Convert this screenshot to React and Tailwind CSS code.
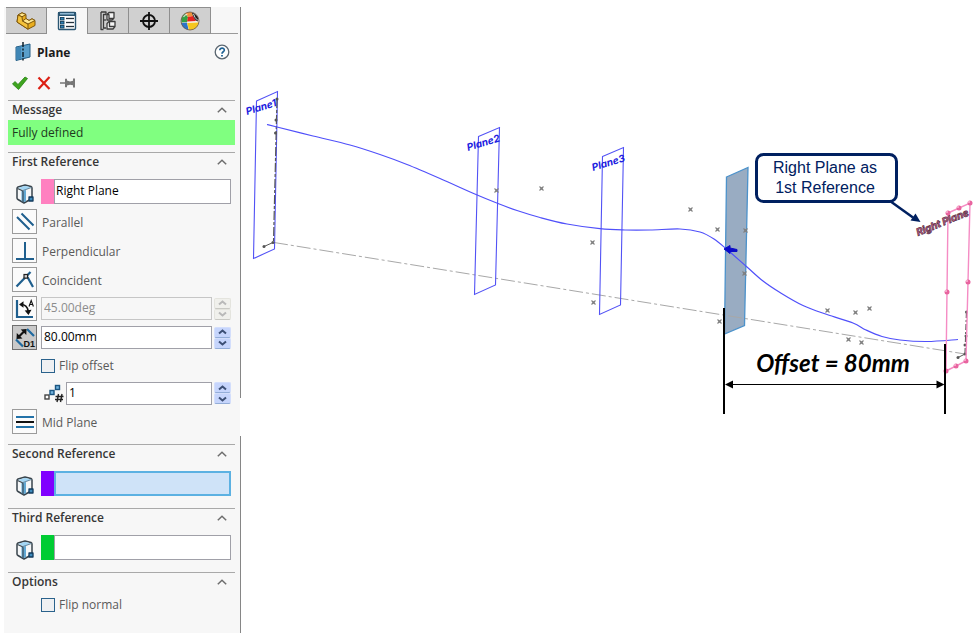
import { useState } from 'react';

const SANS = "font-['Open_Sans','Noto_Sans',sans-serif]";

/* ---------- icons ---------- */

const PartIcon = () => (
    <svg viewBox="0 0 20 18" className="w-5 h-[18px]" stroke="#7d560c" strokeWidth="1" strokeLinejoin="round">
        <path d="M1 10 L2 3 L6 .8 L10 2.500 V6.500 L13 8.500 L16 6.800 L19 8.500 V13.500 L12 17.200 Z" fill="#e9ae1f" />
        <path d="M2 3 L6 .8 L10 2.500 L6 4.800 Z" fill="#ffe68a" />
        <path d="M2 3 L6 4.800 L6.500 9 L12 12 V17.200 L1 10 Z" fill="#f4c23a" />
        <path d="M6.500 9 L10 6.500 L13 8.500 L16 6.800 L19 8.500 L12 12 Z" fill="#ffe891" />
    </svg>
);

const PropertyIcon = () => (
    <svg viewBox="0 0 20 20" className="w-5 h-5">
        <rect x="1.500" y="1.500" width="17" height="17" rx="1" fill="#fff" stroke="#2b5672" strokeWidth="1.400" />
        <rect x="1" y="1" width="18" height="4" fill="#2b5672" />
        <rect x="3" y="2" width="14" height="1.500" fill="#8fb8d4" />
        {[6, 10, 14].map((y) => (
            <g key={y}>
                <rect x="3.500" y={y + 0.5} width="3.500" height="2.500" fill="#2f82b8" stroke="#16405c" strokeWidth=".9" />
                <path d={`M9 ${y + 1.5} H17`} stroke="#26343e" strokeWidth="1.300" />
            </g>
        ))}
    </svg>
);

const ConfigIcon = () => (
    <svg viewBox="0 0 18 20" className="w-[18px] h-5" fill="none" stroke="#3c3c3c" strokeWidth="1.300" strokeLinejoin="round">
        <path d="M2 1 H7 V3.500 H4.500 V17 H7 M2 1 V18.500 H4.500" />
        <path d="M4.500 9 H7" />
        <path d="M8 3.500 L10 1.500 H15 V7 L13 9 H8 Z" fill="#f4f4f4" />
        <path d="M8 3.500 H10.500 M10 4 V7.500 H15" />
        <path d="M8 12.500 L10 10.500 H16 V15.500 L14 18 H8 Z" fill="#f4f4f4" />
        <path d="M10.500 11 V15.500 H16" />
    </svg>
);

const TargetIcon = () => (
    <svg viewBox="0 0 20 20" className="w-5 h-5" fill="none" stroke="#111" strokeWidth="1.800">
        <circle cx="10" cy="10" r="6" />
        <path d="M10 1 V19 M1 10 H19" />
    </svg>
);

const AppearanceIcon = () => (
    <svg viewBox="0 0 20 20" className="w-5 h-5">
        <circle cx="10" cy="10" r="9" fill="#f7f1e6" />
        <path d="M1.200 8.500 A9 9 0 0 1 5 2.500 L8 6 L7 11 L1.500 11.500 Z" fill="#35a043" />
        <path d="M5 2.500 A9 9 0 0 1 12 1.200 L13 5 L8 6 Z" fill="#f0913a" />
        <path d="M8 6 L13 5 L16 10 L7 10.500 Z" fill="#e52320" />
        <path d="M1.200 12 L7 11.500 L8.500 18.800 A9 9 0 0 1 1.200 12 Z" fill="#2c74c8" />
        <path d="M7.200 12 L18.800 11.500 A9 9 0 0 1 9 19 Z" fill="#f6c61f" />
        <path d="M12 2 Q14.500 1.500 17.500 5.500 Q19.200 8.500 17.800 10.500 Q14 9 12 2 Z" fill="#1d1d1d" />
        <path d="M13.500 3 Q14.500 7 18 9.500" stroke="#d8d8d8" strokeWidth="1" fill="none" />
        <path d="M3.500 6 Q5 3.500 7.500 3" stroke="#fff" strokeWidth="1.200" fill="none" opacity=".7" />
        <circle cx="10" cy="10" r="9" fill="none" stroke="#6b5646" strokeWidth=".8" />
    </svg>
);

const PlaneIcon = () => (
    <svg viewBox="0 0 16 20" className="w-4 h-5">
        <path d="M1 5 L15 2 V15 L1 18.500 Z" fill="#5a9fcb" stroke="#245f87" strokeWidth="1" />
        <path d="M1.500 5.500 L6 4.500 V16.500 L1.500 18 Z" fill="#3f86b5" />
        <path d="M8 0 V20" stroke="#10222e" strokeWidth="1.500" strokeDasharray="5 1.500 2 1.500" />
    </svg>
);

const HelpIcon = () => (
    <svg viewBox="0 0 16 16" className="w-4 h-4" fill="none">
        <circle cx="8" cy="8" r="6.800" fill="#fff" stroke="#5a6670" strokeWidth="1.300" />
        <path d="M5.800 6.200 C5.800 3.400 10.400 3.500 10.300 6.200 C10.200 7.800 8 7.700 8 9.700" stroke="#1f6294" strokeWidth="1.700" />
        <path d="M8 10.900 V12.600" stroke="#1f6294" strokeWidth="1.800" />
    </svg>
);

const OkIcon = () => (
    <svg viewBox="0 0 16 14" className="w-4 h-3.5">
        <path d="M.5 8 L3 5.500 L6 8.500 L13 1 L15.500 2.500 L6.500 13.500 Z" fill="#3fa51f" stroke="#22800f" strokeWidth=".8" />
    </svg>
);

const CancelIcon = () => (
    <svg viewBox="0 0 14 14" className="w-3.5 h-3.5" stroke="#dc2014" strokeWidth="2.200">
        <path d="M1.500 1.500 L12.500 13 M12.500 1 L1.500 13" />
    </svg>
);

const PinIcon = () => (
    <svg viewBox="0 0 16 10" className="w-4 h-2.5" fill="#777">
        <path d="M0 4.300 H5 V5.800 H0 Z M5 .8 H7 V2.500 L10 3.500 L13 2.800 V.5 H15 V9.500 H13 V7.200 L10 6.800 L7 7.600 V9.300 H5 Z" />
    </svg>
);

const ChevronIcon = () => (
    <svg viewBox="0 0 10 6" className="w-2.5 h-1.5" fill="none" stroke="#6e6e6e" strokeWidth="1.500">
        <path d="M.8 5.200 L5 1.200 L9.200 5.200" />
    </svg>
);

const CubeIcon = () => (
    <svg viewBox="0 0 20 20" className="w-5 h-5 shrink-0" strokeLinejoin="round">
        <path d="M2 4.500 Q2 3.500 3 3 L10 1 L16 2.500 Q17 3 17 4 V14.500 L9 19 L3 15.500 Q2 15 2 14 Z" fill="#f5f7f8" stroke="#39444c" strokeWidth="1.500" />
        <path d="M3 4 L10 1.800 L16 3.500 L9 6.500 Z" fill="#a3d6f4" />
        <path d="M6.500 7 Q7 6.300 8.500 6.500 L11 6 V17.200 L8.500 18.300 L6.500 17 Z" fill="#62a9d4" />
        <path d="M2.500 4.500 L7 6.500 Q8 7 8 8 V18" fill="none" stroke="#39444c" strokeWidth="1.100" />
        <path d="M7.500 6.700 L16.500 3.500" stroke="#5c7f96" strokeWidth=".9" />
        <rect x="14" y="13" width="4" height="4" fill="#3f8cbd" stroke="#123a5c" strokeWidth="1.300" />
    </svg>
);

const ParallelIcon = () => (
    <svg viewBox="0 0 20 20" className="w-5 h-5" stroke="#1f5f8e" strokeWidth="2">
        <path d="M2 5 L14.500 17.500 M6.500 1.500 L18.500 13.500" />
    </svg>
);

const PerpendicularIcon = () => (
    <svg viewBox="0 0 20 20" className="w-5 h-5" stroke="#1f5f8e" strokeWidth="2">
        <path d="M10 1 V17 M1 18 H19" />
    </svg>
);

const CoincidentIcon = () => (
    <svg viewBox="0 0 20 20" className="w-5 h-5" fill="none" stroke="#1f5f8e" strokeWidth="2.200">
        <path d="M1.500 16.500 L15.500 2" />
        <path d="M10.500 6 L13 8 L18 17" />
        <rect x="9" y="4.500" width="3.600" height="3.600" stroke="#222" strokeWidth="1.200" fill="#cfcfcf" />
    </svg>
);

const AngleIcon = () => (
    <svg viewBox="0 0 20 20" className="w-5 h-5" fill="none">
        <path d="M2 1 V18 H18" stroke="#1f5f8e" strokeWidth="2.200" />
        <path d="M6 5.500 Q12 5.500 13.200 12" stroke="#111" strokeWidth="1.600" />
        <path d="M4 5.500 L8.500 2.300 V8.700 Z M13.500 16 L9.700 11.500 L16.500 10.800 Z" fill="#111" />
        <path d="M14 7.500 L16.200 1.500 L18.400 7.500 M14.800 5.500 H17.600" stroke="#111" strokeWidth="1.100" />
    </svg>
);

const DistanceIcon = () => (
    <svg viewBox="0 0 22 22" className="w-[22px] h-[22px] shrink-0" fill="none">
        <path d="M2 12.500 L9 19.500 M13 2 L20 9" stroke="#1f6aa0" strokeWidth="2.200" />
        <path d="M5 9.500 L10 4.500" stroke="#111" strokeWidth="2.200" />
        <path d="M2.500 12 L2.800 6 L8.500 11.500 Z M12.500 2 L12.300 8 L6.700 2.500 Z" fill="#111" />
        <text x="9.500" y="20" fontSize="9" fontWeight="600" fill="#111" fontFamily="Liberation Sans">D1</text>
    </svg>
);

const MidPlaneIcon = () => (
    <svg viewBox="0 0 20 20" className="w-5 h-5" strokeWidth="2">
        <path d="M1 5 H19 M1 15 H19" stroke="#2372a8" />
        <path d="M1 10 H19" stroke="#111" />
    </svg>
);

const InstancesIcon = () => (
    <svg viewBox="0 0 20 19" className="w-5 h-[19px] shrink-0" fill="#fff" strokeWidth="1.400">
        <rect x="1" y="11" width="4" height="4" stroke="#444" />
        <rect x="6" y="6.500" width="4" height="4" stroke="#1b5580" fill="#6fb1dc" />
        <rect x="11.500" y="1.500" width="4" height="4" stroke="#1b5580" fill="#6fb1dc" />
        <path d="M14.500 10 L13 18 M18 10 L16.500 18 M11.500 12.500 H19.500 M11 15.500 H19" stroke="#222" />
    </svg>
);

/* ---------- property panel ---------- */

const tabs = [
    { label: 'Feature tree', icon: PartIcon },
    { label: 'Property manager', icon: PropertyIcon },
    { label: 'Configurations', icon: ConfigIcon },
    { label: 'Dimensions', icon: TargetIcon },
    { label: 'Appearances', icon: AppearanceIcon },
];

const Section = ({ title, className = '', children }) => {
    const [open, setOpen] = useState(true);

    return (
        <section className={`ml-1 mr-[5px] border-t border-[#a9a9a9] ${className}`}>
            <h2>
                <button
                    onClick={() => setOpen(!open)}
                    aria-expanded={open}
                    className="w-full h-[18px] flex items-center justify-between pl-1 pr-2 text-xs font-semibold text-[#363636]"
                >
                    {title}
                    <ChevronIcon />
                </button>
            </h2>
            {open && children}
        </section>
    );
};

const SelectionBox = ({ label, swatch, value, box }) => (
    <div className="flex items-end pt-2 pl-[7px] pr-1">
        <CubeIcon />
        <span className={`w-[13px] h-[25px] ml-1.5 ${swatch}`}></span>
        <input
            aria-label={label}
            defaultValue={value}
            className={`flex-1 min-w-0 h-[25px] px-px pb-0.5 text-xs text-black outline-none ${box}`}
        />
    </div>
);

const ToolButton = ({ label, pressed, children }) => (
    <button
        aria-label={label}
        className={`w-[25px] h-[25px] shrink-0 flex items-center justify-center border ${pressed ? 'bg-[#c9c9c9] border-[#6f6f6f]' : 'bg-[#fbfbfb] border-[#9b9b9b]'}`}
    >
        {children}
    </button>
);

const Constraint = ({ label, children }) => (
    <div className="flex items-center gap-[5px] text-xs text-[#5a5a5a]">
        <ToolButton label={label}>{children}</ToolButton>
        <span className="pt-0.5">{label}</span>
    </div>
);

const Spinner = ({ label, disabled }) => {
    const tone = disabled
        ? 'bg-[#f0f0ec] border-[#e4e4de] border-b-[#c9c9c4] text-[#b9b9b9]'
        : 'bg-[#c6d5fc] border-[#d3defc] border-b-[#93add8] text-[#3c4f75]';

    return (
        <span className="w-[17px] flex flex-col shrink-0">
            {['M1 4.500 L4.500 1.500 L8 4.500', 'M1 1.500 L4.500 4.500 L8 1.500'].map((d, i) => (
                <button
                    key={d}
                    disabled={disabled}
                    aria-label={`${i ? 'Decrease' : 'Increase'} ${label}`}
                    className={`h-[11px] flex items-center justify-center rounded-xs border ${tone}`}
                >
                    <svg viewBox="0 0 9 6" className="w-[9px] h-1.5" fill="none" stroke="currentColor" strokeWidth="2">
                        <path d={d} />
                    </svg>
                </button>
            ))}
        </span>
    );
};

const NumberField = ({ label, value, disabled }) => (
    <div className="flex-1 min-w-0 flex items-center gap-0.5">
        <input
            aria-label={label}
            defaultValue={value}
            disabled={disabled}
            className={`flex-1 min-w-0 h-[23px] px-0.5 pb-0.5 text-xs border outline-none ${disabled ? 'bg-[#f7f7f7] border-[#c6c6c6] text-[#8c8c8c]' : 'bg-white border-[#a0a0a8] text-black'}`}
        />
        <Spinner label={label} disabled={disabled} />
    </div>
);

const Check = ({ label }) => (
    <label className="flex items-center gap-1 pl-[33px] text-xs text-[#5a5a5a]">
        <input type="checkbox" className="appearance-none w-3.5 h-3.5 border border-[#2a628c] bg-[#eef0f2] checked:bg-[#2a628c]" />
        {label}
    </label>
);

const PropertyPanel = () => (
    <aside className={`relative w-[237px] shrink-0 ml-1 mt-[7px] bg-[#f7f7f7] border-r border-[#868686] ${SANS}`}>
        <nav className="flex h-[27px] pl-0.5 pr-0.5">
            {tabs.map(({ label, icon: Icon }, i) => (
                <button
                    key={label}
                    aria-label={label}
                    className={`w-[41px] flex items-center justify-center border-r border-t border-[#8f8f8f] ${i === 1 ? 'bg-[#f7f7f7]' : 'bg-[#d0d0d0] border-b'}`}
                >
                    <Icon />
                </button>
            ))}
            <span className="flex-1 border-b border-[#9a9a9a]"></span>
        </nav>

        <header>
            <div className="flex items-center h-9 pl-[11px] pr-2.5">
                <PlaneIcon />
                <h1 className="flex-1 pl-1.5 pt-px text-xs font-bold text-[#1c1c1c]">Plane</h1>
                <button aria-label="Help"><HelpIcon /></button>
            </div>
            <div className="flex items-center gap-[9px] h-[30px] pb-1 pl-2">
                <button aria-label="OK"><OkIcon /></button>
                <button aria-label="Cancel"><CancelIcon /></button>
                <button aria-label="Keep visible"><PinIcon /></button>
            </div>
        </header>

        <Section title="Message" className="pb-[7px]">
            <div className="pt-px">
                <p className="h-[25px] pl-1 pt-px flex items-center bg-[#80ff80] text-xs text-[#1e3a1e]">Fully defined</p>
            </div>
        </Section>

        <Section title="First Reference" className="pb-2.5">
            <SelectionBox label="First reference" swatch="bg-[#ff80c0]" value="Right Plane" box="bg-white border border-[#a0a0a8]" />
            <div className="flex flex-col gap-1 pt-[5px] pl-1 pr-1">
                <Constraint label="Parallel"><ParallelIcon /></Constraint>
                <Constraint label="Perpendicular"><PerpendicularIcon /></Constraint>
                <Constraint label="Coincident"><CoincidentIcon /></Constraint>
                <div className="flex items-center gap-1">
                    <ToolButton label="At angle"><AngleIcon /></ToolButton>
                    <NumberField label="angle" value="45.00deg" disabled />
                </div>
                <div className="flex items-center gap-1">
                    <ToolButton label="Offset distance" pressed><DistanceIcon /></ToolButton>
                    <NumberField label="offset distance" value="80.00mm" />
                </div>
                <div className="h-[23px] flex items-center -ml-1">
                    <Check label="Flip offset" />
                </div>
                <div className="h-6 flex items-center gap-0.5 pl-8">
                    <InstancesIcon />
                    <NumberField label="number of planes" value="1" />
                </div>
                <Constraint label="Mid Plane"><MidPlaneIcon /></Constraint>
            </div>
        </Section>

        <Section title="Second Reference" className="pb-3">
            <SelectionBox label="Second reference" swatch="bg-[#8000ff]" box="bg-[#cfe3f8] border-2 border-[#5cb1e2]" />
        </Section>

        <Section title="Third Reference" className="pb-3">
            <SelectionBox label="Third reference" swatch="bg-[#00cc33]" box="bg-white border border-[#a0a0a8]" />
        </Section>

        <Section title="Options">
            <div className="pt-1.5">
                <Check label="Flip normal" />
            </div>
        </Section>

        {/* splitter grip on the panel edge */}
        <span className="absolute -right-px top-[391px] w-px h-[38px] bg-white"></span>
    </aside>
);

/* ---------- graphics area ---------- */

const curve = [
    [267, 124.5], [277, 127], [313, 136], [350, 145], [380, 154.5], [407, 164.5], [440, 178.5], [476, 194.5],
    [498, 203.5], [517, 210.5], [540, 217.5], [567, 224], [600, 228.7], [625, 230], [650, 230], [680, 229],
    [700, 232], [714, 239], [727, 249.5], [747, 267], [763, 281], [780, 292.5], [803, 305.5], [827, 314.5],
    [853, 323], [866, 330], [882, 336.5], [900, 340], [927, 341.5], [958, 339.5],
];

const marks = [
    [496, 190], [541, 188], [592, 242], [593, 302], [690, 209], [717, 229], [745, 230], [744, 273],
    [719, 321], [827, 310], [855, 312], [869, 308], [848, 339], [861, 342],
];

const handles = [[948, 213], [959, 208], [970, 203], [968, 282], [947, 292], [966, 361], [956, 366], [946, 371]];

const planes = [
    { name: 'Plane1', outline: '256.5,101 277.5,91.5 274.5,249 253.5,258.5', x: 247, y: 115 },
    { name: 'Plane2', outline: '478.5,136.5 499.5,127.5 495.5,285 474.5,294.5', x: 468, y: 151 },
    { name: 'Plane3', outline: '602.5,156.5 623.5,147.5 620.5,305 599.5,314.5', x: 593, y: 171 },
];

const sketchDots = [
    [277, 99], [276, 120], [275.5, 133], [273, 242.5], [264, 246.5],
    [966.5, 312], [966, 336], [965, 345], [965, 354], [958, 357.5],
];

// Catmull-Rom spline through the points, as cubic segments
const splinePath = (pts) =>
    pts.slice(1).reduce((d, p, i) => {
        const p0 = pts[i - 1] || pts[i];
        const p1 = pts[i];
        const p3 = pts[i + 2] || p;
        return `${d} C${p1[0] + (p[0] - p0[0]) / 6} ${p1[1] + (p[1] - p0[1]) / 6} ${p[0] - (p3[0] - p1[0]) / 6} ${p[1] - (p3[1] - p1[1]) / 6} ${p[0]} ${p[1]}`;
    }, `M${pts[0][0]} ${pts[0][1]}`);

const GraphicsArea = () => (
    <svg viewBox="241 0 737 633" className="w-full" role="img" aria-label="Reference planes along a spline">
        <polygon points="726.5,177 748,167.5 744.5,325.5 724.5,334" fill="#99acc2" stroke="#4c92cb" strokeWidth="1.300" />

        <path d="M274 242.500 L965 354" fill="none" stroke="#a8a8a8" strokeWidth="1" strokeDasharray="14 3 3 3" />

        {planes.map((p) => (
            <g key={p.name}>
                <polygon points={p.outline} fill="none" stroke="#5252f5" strokeWidth="1.100" />
                <text
                    transform={`translate(${p.x} ${p.y}) rotate(-17)`}
                    className="font-['Inter',sans-serif] text-[10px] font-bold italic [font-feature-settings:'cv11']"
                    fill="#2020e0"
                >
                    {p.name}
                </text>
            </g>
        ))}

        {/* sketch lines on Plane1 and Right Plane */}
        <g fill="none" stroke="#555" strokeWidth="1.200">
            <path d="M277 99 L273.500 242" strokeDasharray="9 2 3 2" />
            <path d="M966.500 312 L965 354" strokeDasharray="6 2 2 2" />
            <path d="M273 242.500 L264 246.500 M965 354 L958 357.500" strokeWidth="1" />
        </g>
        {sketchDots.map(([x, y]) => (
            <circle key={`${x}-${y}`} cx={x} cy={y} r="1.500" fill="#555" />
        ))}

        <g stroke="#808080" strokeWidth="1.100">
            {marks.map(([x, y]) => (
                <g key={`${x}-${y}`}>
                    <rect x={x - 0.5} y={y - 0.5} width="2" height="2" fill="#666" stroke="none" />
                    <path d={`M${x - 1.5} ${y - 1.5} l4 4 m0 -4 l-4 4`} />
                </g>
            ))}
        </g>

        <path d={splinePath(curve)} fill="none" stroke="#5050fa" strokeWidth="1.200" />
        <path d="M724 249 L730 245.500 V248 L737 249.500 V251.500 L730 251.500 V253.500 Z" fill="#0a0ac8" stroke="#0a0ac8" strokeWidth="1" />

        <polygon points="948,213 970,203 966,361 946,371" fill="none" stroke="#f58cc4" strokeWidth="1.400" />
        {handles.map(([x, y]) => (
            <g key={`${x}-${y}`}>
                <circle cx={x} cy={y} r="2.500" fill="#e8649f" />
                <circle cx={x - 1} cy={y - 1} r=".9" fill="#fbc4de" />
            </g>
        ))}
        <text
            transform="translate(918 236) rotate(-22)"
            className="font-['Inter',sans-serif] text-[10px] font-bold italic [font-feature-settings:'cv11']"
            fill="#c8608f"
            stroke="#5c3448"
            strokeWidth=".7"
        >
            Right Plane
        </text>

        {/* callout */}
        <path d="M890 201 L913 217.500" stroke="#002060" strokeWidth="2.500" />
        <path d="M920.500 222 L910.500 220.500 L915.500 213.500 Z" fill="#002060" />
        <rect x="756.500" y="154.500" width="140" height="47" rx="7" fill="#fff" stroke="#002060" strokeWidth="3" />
        <g className="font-['Liberation_Sans',sans-serif] text-base" fill="#002060" textAnchor="middle">
            <text x="825" y="173">Right Plane as</text>
            <text x="825" y="193">1st Reference</text>
        </g>

        {/* offset dimension */}
        <g stroke="#000">
            <path d="M724 308 V414 M945 344 V414" strokeWidth="2" />
            <path d="M728 384.500 H941" strokeWidth="1" />
        </g>
        <path d="M725 384.500 l8 -4 v8 Z M944.500 384.500 l-8 -4 v8 Z" />
        <text x="833" y="372" textAnchor="middle" className="font-['Lato',sans-serif] text-2xl font-bold italic">
            Offset = 80mm
        </text>
    </svg>
);

export default function App() {
    return (
        <div className="flex min-h-screen bg-white">
            <PropertyPanel />
            <main className="flex-1 min-w-0">
                <GraphicsArea />
            </main>
        </div>
    );
}
